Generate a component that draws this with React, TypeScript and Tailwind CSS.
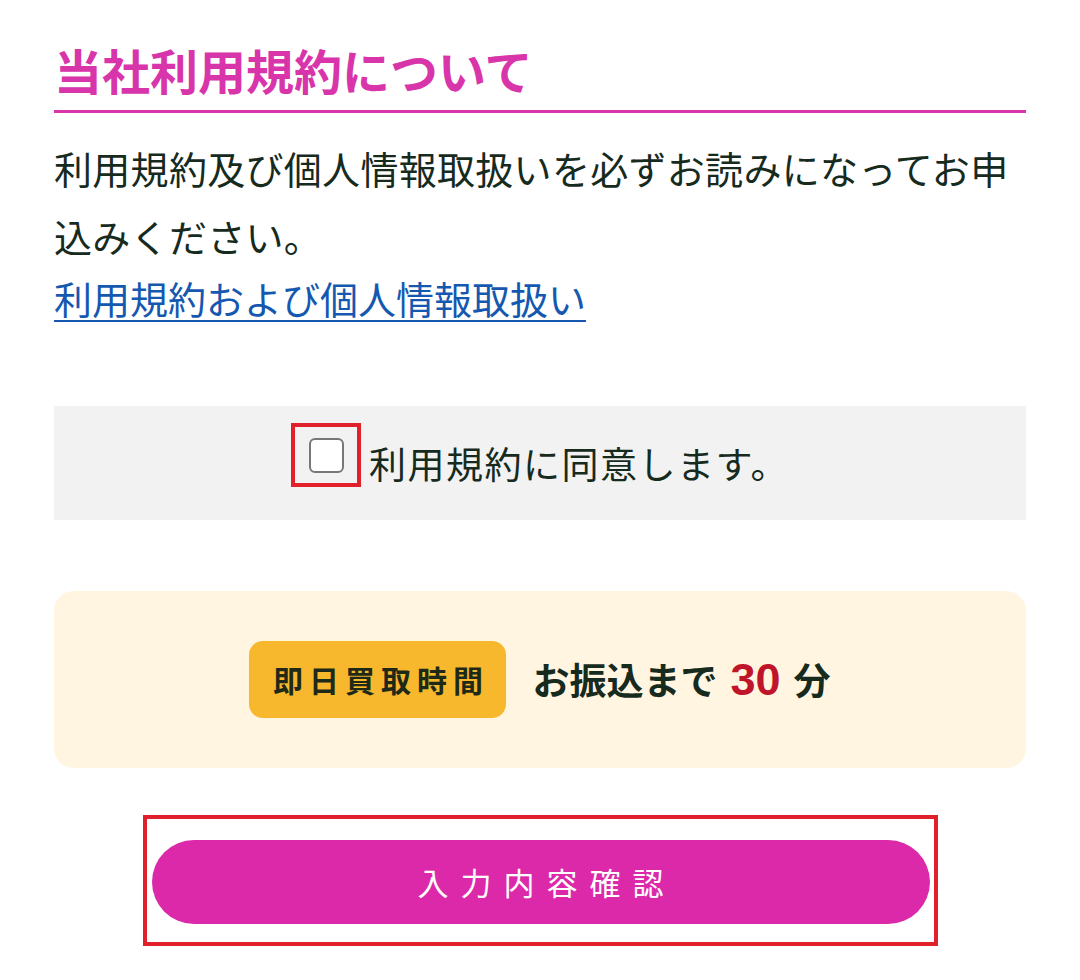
export default function App() {
  const jp = { fontFamily: '"Noto Sans CJK JP", "Noto Sans", sans-serif' };

  return (
    <div className="w-[1080px] min-h-[980px] bg-white px-[54px] pt-[40px] text-[#162a1e]" style={jp}>
      <h2 className="border-b-[3px] border-[#d935ab] pb-[12px] text-[48px] font-bold leading-[58px] text-[#d935ab]">
        当社利用規約について
      </h2>

      <p className="mt-[21px] text-[38px] leading-[68px] tracking-[0.3px]">
        利用規約及び個人情報取扱いを必ずお読みになってお申込みください。
      </p>
      <a href="#" className="block text-[38px] leading-[56px] text-[#1558b0] underline underline-offset-[6px] decoration-2">
        <span>利用規約および個人情報取扱い</span>
      </a>

      <div className="mt-[80px] flex h-[114px] items-center justify-center bg-[#f2f2f2]">
        <label className="flex items-center">
          <span className="mt-[-16px] flex h-[64px] w-[70px] items-center justify-center border-4 border-[#e0202a]">
            <span className="h-[35px] w-[35px] rounded-[6px] border-2 border-[#777] bg-white" />
          </span>
          <span className="ml-[8px] text-[37px] leading-[48px] tracking-[1.5px]">利用規約に同意します。</span>
        </label>
      </div>

      <div className="mt-[71px] flex h-[177px] items-center justify-center rounded-[20px] bg-[#fff5e1]">
        <span className="flex h-[77px] w-[257px] items-center justify-center rounded-[14px] bg-[#f7b82e] pl-[6px] text-[30px] font-bold tracking-[6px] text-[#1e2a17]">
          即日買取時間
        </span>
        <span className="ml-[26px] flex items-baseline text-[37px] font-bold text-[#162a1e]">
          お振込まで
          <span className="mx-[13px] text-[45px] text-[#c0142a]" style={{ fontFamily: '"Liberation Sans", "Noto Sans", sans-serif' }}>30</span>
          分
        </span>
      </div>

      <div className="mx-auto mt-[47px] w-[795px] border-4 border-[#e0202a] pb-[18px] pl-[5px] pr-[4px] pt-[21px]">
        <button className="flex h-[84px] w-full items-center justify-center rounded-full bg-[#dc29a9] pl-[12px] text-[31px] tracking-[12px] text-white">
          入力内容確認
        </button>
      </div>
    </div>
  );
}
